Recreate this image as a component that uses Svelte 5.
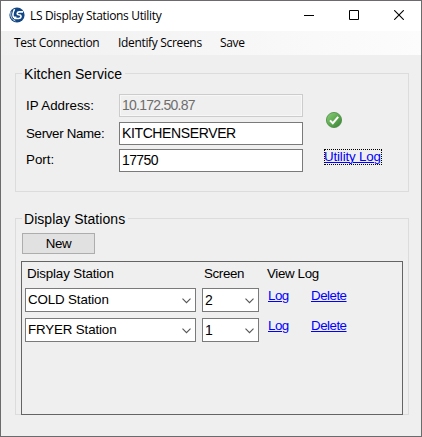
<script>
  const menu = [
    { label: 'Test Connection', width: 104 },
    { label: 'Identify Screens', width: 102 },
    { label: 'Save', width: 40 }
  ];
  const fields = [
    { label: 'IP Address:', kind: 'address', value: '10.172.50.87', disabled: true },
    { label: 'Server Name:', kind: 'server', value: 'KITCHENSERVER' },
    { label: 'Port:', kind: 'port', value: '17750' }
  ];
  const stations = [
    { name: 'COLD Station', screen: '2' },
    { name: 'FRYER Station', screen: '1' }
  ];
</script>

{#snippet combo(value, kind)}
  <div class="combo {kind}">
    <span>{value}</span>
    <svg width="9" height="6" viewBox="0 0 9 6"><path d="M.5 .7 4.5 4.7 8.5 .7" fill="none" stroke="#555" stroke-width="1.1" /></svg>
  </div>
{/snippet}

<div class="window">
  <header>
    <svg class="logo" width="16" height="16" viewBox="0 0 16 16">
      <circle cx="8" cy="8" r="7.6" fill="#124684" />
      <path d="M5.6 2.2C4 5.2 3.7 8.6 4.5 10.3H7.4" fill="none" stroke="#fff" stroke-width="1.5" />
      <path d="M14 4.9H10.4C7.6 4.9 7.5 7.5 9.8 7.8C13 8.1 12.6 11.2 9.8 11.5H5" fill="none" stroke="#fff" stroke-width="1.6" />
      <path d="M2.2 4.6C.8 8.6 2.6 12.6 6.4 14" fill="none" stroke="#fff" stroke-width=".8" />
    </svg>
    <h1>LS Display Stations Utility</h1>
    <div class="controls">
      <svg width="10" height="10" viewBox="0 0 10 10"><path d="M0 5.5H10" stroke="#000" /></svg>
      <svg width="10" height="10" viewBox="0 0 10 10"><path d="M.5 .5H9.5V9.5H.5Z" fill="none" stroke="#000" /></svg>
      <svg width="10" height="10" viewBox="0 0 10 10"><path d="M.2 .2 9.8 9.8M9.8 .2 .2 9.8" stroke="#000" stroke-width="1.1" /></svg>
    </div>
  </header>
  <nav>
    {#each menu as item}
      <span style="width: {item.width}px">{item.label}</span>
    {/each}
  </nav>

  <main>
    <section class="group service">
      <h2><span>Kitchen Service</span></h2>
      <div class="service-body">
        <div class="fields">
          {#each fields as field}
            <div class="field {field.kind}">
              <span class="label">{field.label}</span>
              <div class="input" class:disabled={field.disabled}>{field.value}</div>
            </div>
          {/each}
        </div>
        <div class="status">
          <svg width="16" height="16" viewBox="0 0 16 16">
            <defs>
              <linearGradient id="ok" x1="0" y1="0" x2="1" y2="1">
                <stop offset="0" stop-color="#8fd07e" />
                <stop offset=".5" stop-color="#5daa50" />
                <stop offset="1" stop-color="#3c8037" />
              </linearGradient>
            </defs>
            <circle cx="8" cy="8" r="7.6" fill="url(#ok)" stroke="#478a41" stroke-width=".8" />
            <path d="M4 8.4 6.8 11.2 12.2 4.8" fill="none" stroke="#fff" stroke-width="2" />
          </svg>
          <a class="utility" href="#log">Utility Log</a>
        </div>
      </div>
    </section>

    <section class="group stations">
      <h2><span>Display Stations</span></h2>
      <button>New</button>
      <div class="panel">
        <div class="row head">
          <span class="c1">Display Station</span>
          <span class="c2">Screen</span>
          <span class="c3">View Log</span>
        </div>
        {#each stations as station}
          <div class="row">
            {@render combo(station.name, 'wide')}
            {@render combo(station.screen, 'narrow')}
            <a class="log" href="#log">Log</a>
            <a class="delete" href="#delete">Delete</a>
          </div>
        {/each}
      </div>
    </section>
  </main>
</div>

<style>
  .window {
    box-sizing: border-box;
    width: 422px;
    height: 437px;
    border: 1px solid #6c6a6c;
    background: #efefef;
    font: 13.33px/16px 'Liberation Sans', Arial, sans-serif;
    color: #000;
    overflow: hidden;
    white-space: nowrap;
  }
  header {
    display: flex;
    height: 30px;
    background: #fff;
    font-family: 'Open Sans', 'Noto Sans', sans-serif;
  }
  .logo { margin: 6px 5px 0 8px; flex: none; }
  h1 {
    margin: 0;
    font-size: 12px;
    line-height: 29px;
    font-weight: 400;
    letter-spacing: -0.33px;
  }
  .controls {
    display: flex;
    gap: 35px;
    margin: 9px 17px 0 auto;
  }
  nav {
    display: flex;
    height: 24px;
    padding-left: 13px;
    background: linear-gradient(90deg, #f0f0f0, #fcfcfc);
    font: 12px/23px 'Open Sans', 'Noto Sans', sans-serif;
    letter-spacing: -0.33px;
  }
  main { padding: 18px 12px 0 14px; }
  .group {
    box-sizing: border-box;
    width: 394px;
    border: 1px solid #dcdcdc;
  }
  .service { height: 119px; }
  .stations { height: 197px; margin-top: 26px; }
  h2 {
    display: flex;
    height: 16px;
    margin: -8px 0 0 6px;
    font-size: 14px;
    font-weight: 400;
    letter-spacing: 0.05px;
  }
  h2 span { padding: 0 3px 0 2px; background: #efefef; }
  .service-body { display: flex; padding: 12px 0 0 10px; }
  .fields { display: flex; flex-direction: column; gap: 4px; }
  .field { display: flex; height: 23px; }
  .field:first-child { margin-bottom: 1px; }
  .label { width: 93px; padding-top: 4px; }
  .server .label { letter-spacing: -0.33px; }
  .port .label { padding-top: 3px; }
  .input {
    box-sizing: border-box;
    width: 184px;
    height: 23px;
    padding: 2px;
    border: 1px solid #7a7a7a;
    background: #fff;
    font-size: 14px;
  }
  .address .input { letter-spacing: -0.75px; }
  .server .input { letter-spacing: -0.38px; }
  .port .input { letter-spacing: -0.6px; }
  .input.disabled {
    border-color: #ccc;
    background: #efefef;
    box-shadow: inset 0 0 0 1px #f7f7f7;
    color: #6d6d6d;
  }
  .status {
    display: flex;
    flex-direction: column;
    align-items: flex-start;
    padding: 18px 0 0 21px;
  }
  .status svg { margin-left: 2px; }
  a { color: #00f; text-decoration: underline; text-underline-offset: 1px; text-decoration-thickness: 1px; letter-spacing: -0.5px; }
  .utility {
    box-sizing: border-box;
    width: 58px;
    height: 16px;
    margin-top: 21px;
    outline: 1px dotted #000;
    outline-offset: -1px;
    line-height: 15px;
    letter-spacing: -0.15px;
  }
  button {
    display: block;
    box-sizing: border-box;
    width: 73px;
    height: 21px;
    margin: 6px 0 7px 6px;
    padding: 0;
    border: 1px solid #adadad;
    background: #e1e1e1;
    color: #000;
    font: inherit;
    line-height: 19px;
    letter-spacing: -0.4px;
  }
  .panel {
    box-sizing: border-box;
    width: 382px;
    height: 154px;
    margin-left: 5px;
    border: 1px solid #646464;
    padding: 4px 0 0 3px;
  }
  .row { display: flex; height: 24px; margin-bottom: 6px; }
  .row.head { height: 16px; padding-left: 2px; letter-spacing: -0.15px; }
  .c1 { width: 177px; }
  .c2 { width: 63px; letter-spacing: -0.35px; }
  .c3 { letter-spacing: -0.35px; }
  .combo {
    box-sizing: border-box;
    display: flex;
    justify-content: space-between;
    align-items: center;
    height: 24px;
    padding: 0 4px 0 2px;
    border: 1px solid #7a7a7a;
    background: #fff;
    letter-spacing: -0.13px;
  }
  .combo svg { margin-top: 2px; }
  .wide { width: 171px; margin-right: 6px; }
  .narrow { width: 57px; margin-right: 9px; }
  .narrow span { font-size: 14px; }
  .log { width: 22px; height: 16px; margin-right: 21px; }
</style>
